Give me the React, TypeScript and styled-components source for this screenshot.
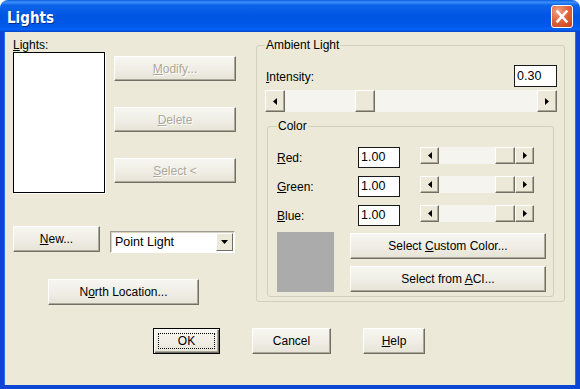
import styled, { createGlobalStyle } from "styled-components";

const GlobalStyle = createGlobalStyle`
  html, body {
    margin: 0;
    padding: 0;
    background: #ffffff;
  }
  body {
    font-family: "Liberation Sans", Arial, sans-serif;
    font-size: 12px;
    color: #000;
  }
`;

const ScrollBar = ({ value, h, aw }: { value: number; h: number; aw: number }) => {
  return (
    <Track $h={h}>
      <ArrowButton $w={aw}>
        <svg width="4" height="7" viewBox="0 0 4 7">
          <polygon points="4,0 0,3.5 4,7" fill="#000" />
        </svg>
      </ArrowButton>
      <Rail>
        <Spacer style={{ flexGrow: value }} />
        <Thumb />
        <Spacer style={{ flexGrow: 1 - value }} />
      </Rail>
      <ArrowButton $w={aw}>
        <svg width="4" height="7" viewBox="0 0 4 7">
          <polygon points="0,0 4,3.5 0,7" fill="#000" />
        </svg>
      </ArrowButton>
    </Track>
  );
};

const ColorRow = ({ label, rest }: { label: string; rest: string }) => {
  return (
    <Row>
      <RowLabel>
        <u>{label}</u>
        {rest}
      </RowLabel>
      <Edit $w={42} $h={21}>1.00</Edit>
      <ScrollSlot>
        <ScrollBar value={1} h={17} aw={19} />
      </ScrollSlot>
    </Row>
  );
};

const App = () => {
  return (
    <>
      <GlobalStyle />
      <Window>
        <TitleBar>
          <Title>Lights</Title>
          <CloseButton>
            <svg width="20" height="21" viewBox="0 0 20 21">
              <path d="M5.5 5.5 L14.5 15.5 M14.5 5.5 L5.5 15.5" stroke="#fff" strokeWidth="2.6" strokeLinecap="square" />
            </svg>
          </CloseButton>
        </TitleBar>
        <Frame>
          <Main>
            <LeftCol>
              <Label>
                <u>L</u>ights:
              </Label>
              <ListRow>
                <ListBox />
                <SideButtons>
                  <Button $w={122} $h={25} disabled>
                    <u>M</u>odify...
                  </Button>
                  <Button $w={122} $h={25} disabled>
                    <u>D</u>elete
                  </Button>
                  <Button $w={122} $h={25} disabled>
                    <u>S</u>elect &lt;
                  </Button>
                </SideButtons>
              </ListRow>
              <NewRow>
                <Button $w={87}>
                  <u>N</u>ew...
                </Button>
                <Combo>
                  <ComboText>Point Light</ComboText>
                  <ComboButton>
                    <svg width="7" height="4" viewBox="0 0 7 4">
                      <polygon points="0,0 7,0 3.5,4" fill="#000" />
                    </svg>
                  </ComboButton>
                </Combo>
              </NewRow>
              <NorthButton $w={151}>
                N<u>o</u>rth Location...
              </NorthButton>
            </LeftCol>

            <AmbientGroup>
              <Legend>Ambient Light</Legend>
              <IntensityRow>
                <IntensityLabel>
                  <u>I</u>ntensity:
                </IntensityLabel>
                <Edit $w={43} $h={22}>0.30</Edit>
              </IntensityRow>
              <IntensityScroll>
                <ScrollBar value={0.3} h={22} aw={20} />
              </IntensityScroll>

              <ColorGroup>
                <ColorLegend>Color</ColorLegend>
                <Rows>
                  <ColorRow label="R" rest="ed:" />
                  <ColorRow label="G" rest="reen:" />
                  <ColorRow label="B" rest="lue:" />
                </Rows>
                <SwatchRow>
                  <Swatch />
                  <SwatchButtons>
                    <Button $w={196}>
                      Select <u>C</u>ustom Color...
                    </Button>
                    <Button $w={196}>
                      Select from <u>A</u>CI...
                    </Button>
                  </SwatchButtons>
                </SwatchRow>
              </ColorGroup>
            </AmbientGroup>
          </Main>

          <Footer>
            <DefaultButton $w={67}>
              <FocusRing>OK</FocusRing>
            </DefaultButton>
            <Button $w={79}>Cancel</Button>
            <Button $w={62}>
              <u>H</u>elp
            </Button>
          </Footer>
        </Frame>
      </Window>
    </>
  );
};

export default App;

const Window = styled.div`
  width: 580px;
  height: 389px;
  display: flex;
  flex-direction: column;
  border-radius: 8px 8px 0 0;
  overflow: hidden;
`;

const TitleBar = styled.div`
  height: 32px;
  flex-shrink: 0;
  display: flex;
  align-items: flex-start;
  justify-content: space-between;
  padding: 0 7px;
  background: linear-gradient(
    180deg,
    #0a5fe0 0%,
    #3d8ff9 7%,
    #0c63ea 16%,
    #0056e3 50%,
    #0058ea 82%,
    #0663f4 92%,
    #0343c9 100%
  );
`;

const Title = styled.div`
  margin-top: 10px;
  font-family: "Liberation Sans Narrow", "DejaVu Sans Condensed", "Liberation Sans", sans-serif;
  font-weight: bold;
  font-size: 15px;
  line-height: 17px;
  color: #fff;
  text-shadow: 1px 1px 0 #0a2a8c;
`;

const CloseButton = styled.div`
  margin-top: 5px;
  width: 22px;
  height: 23px;
  box-sizing: border-box;
  display: flex;
  align-items: center;
  justify-content: center;
  border: 1px solid #fff;
  border-radius: 3px;
  background: radial-gradient(circle at 30% 25%, #f0a283 0%, #e2663f 45%, #c4411a 100%);
`;

const Frame = styled.div`
  flex: 1;
  display: flex;
  flex-direction: column;
  background: #ece9d8;
  border: 4px solid #0b47d4;
  border-top: 0;
  box-shadow: inset 1px 0 0 #2a6cf0, inset -1px 0 0 #2a6cf0;
`;

const Main = styled.div`
  display: grid;
  grid-template-columns: 223px 309px;
  column-gap: 20px;
  align-items: start;
  padding: 6px 0 0 9px;
`;

const LeftCol = styled.div`
  display: flex;
  flex-direction: column;
`;

const Label = styled.div`
  line-height: 14px;
`;

const ListRow = styled.div`
  display: flex;
  align-items: flex-start;
`;

const ListBox = styled.div`
  width: 92px;
  height: 141px;
  box-sizing: border-box;
  background: #fff;
  border: 1px solid #000;
  box-shadow: 1px 1px 0 #fff;
`;

const SideButtons = styled.div`
  display: flex;
  flex-direction: column;
  gap: 26px;
  margin-left: 9px;
  padding-top: 4px;
`;

const Button = styled.button<{ $w: number; $h?: number }>`
  width: ${(p) => p.$w}px;
  height: ${(p) => p.$h ?? 26}px;
  box-sizing: border-box;
  padding: 0;
  font-family: "Liberation Sans", Arial, sans-serif;
  font-size: 12px;
  color: #000;
  background: linear-gradient(180deg, #f7f6f1 0%, #eeece3 60%, #e6e3d6 100%);
  border: 1px solid;
  border-color: #ffffff #716f64 #716f64 #ffffff;
  box-shadow: inset -1px -1px 0 #aca899;
  flex-shrink: 0;

  &:disabled {
    color: #aca899;
    text-shadow: 1px 1px 0 #fff;
  }
`;

const NewRow = styled.div`
  display: flex;
  align-items: flex-start;
  gap: 10px;
  margin-top: 33px;
`;

const Combo = styled.div`
  margin-top: 5px;
  width: 125px;
  height: 22px;
  box-sizing: border-box;
  display: flex;
  background: #fff;
  border: 1px solid;
  border-color: #9d9b90 #fff #fff #9d9b90;
  box-shadow: inset 1px 1px 0 #d6d3c6;
`;

const ComboText = styled.div`
  flex: 1;
  padding-left: 4px;
  line-height: 20px;
  font-size: 12.5px;
`;

const ComboButton = styled.div`
  width: 17px;
  display: flex;
  align-items: center;
  justify-content: center;
  background: #ece9d8;
  border: 1px solid;
  border-color: #fff #716f64 #716f64 #fff;
  box-sizing: border-box;
  margin: 1px;
`;

const NorthButton = styled(Button)`
  margin: 26px 0 0 35px;
`;

const AmbientGroup = styled.fieldset`
  margin: 0;
  min-width: 0;
  padding: 0 7px 4px 8px;
  border: 1px solid #d0d0bf;
  border-radius: 3px;
  display: flex;
  flex-direction: column;
`;

const Legend = styled.legend`
  padding: 0 1px;
  line-height: 14px;
  font-size: 12px;
`;

const IntensityRow = styled.div`
  display: flex;
  align-items: center;
  justify-content: space-between;
  margin-top: 13px;
`;

const IntensityLabel = styled.div`
  margin-left: 1px;
  padding-top: 2px;
`;

const Edit = styled.div<{ $w: number; $h: number }>`
  width: ${(p) => p.$w}px;
  height: ${(p) => p.$h}px;
  box-sizing: border-box;
  padding-left: 2px;
  line-height: ${(p) => p.$h - 2}px;
  font-size: 12.5px;
  background: #fff;
  border: 1px solid #1a1a1a;
  flex-shrink: 0;
`;

const IntensityScroll = styled.div`
  margin-top: 3px;
`;

const Track = styled.div<{ $h: number }>`
  height: ${(p) => p.$h}px;
  display: flex;
`;

const ArrowButton = styled.div<{ $w: number }>`
  width: ${(p) => p.$w}px;
  flex-shrink: 0;
  box-sizing: border-box;
  display: flex;
  align-items: center;
  justify-content: center;
  background: #ece9d8;
  border: 1px solid;
  border-color: #fff #716f64 #716f64 #fff;
  box-shadow: inset -1px -1px 0 #aca899;
`;

const Rail = styled.div`
  flex: 1;
  display: flex;
  background: #f5f4ee;
`;

const Spacer = styled.div`
  flex-basis: 0;
`;

const Thumb = styled.div`
  width: 20px;
  flex-shrink: 0;
  box-sizing: border-box;
  background: #ece9d8;
  border: 1px solid;
  border-color: #fff #716f64 #716f64 #fff;
  box-shadow: inset -1px -1px 0 #aca899;
`;

const ColorGroup = styled.fieldset`
  margin: 7px 3px 0 2px;
  min-width: 0;
  padding: 0 7px 4px 9px;
  border: 1px solid #d0d0bf;
  border-radius: 3px;
`;

const ColorLegend = styled(Legend)``;

const Rows = styled.div`
  display: flex;
  flex-direction: column;
  gap: 8px;
  margin-top: 14px;
`;

const Row = styled.div`
  display: flex;
  align-items: flex-start;
  height: 21px;
`;

const RowLabel = styled.div`
  width: 81px;
  line-height: 22px;
  height: 21px;
`;

const ScrollSlot = styled.div`
  width: 114px;
  margin-left: 20px;
`;

const SwatchRow = styled.div`
  display: flex;
  align-items: flex-start;
  margin-top: 6px;
`;

const Swatch = styled.div`
  width: 57px;
  height: 60px;
  background: #ababab;
`;

const SwatchButtons = styled.div`
  display: flex;
  flex-direction: column;
  gap: 7px;
  margin-left: 16px;
  padding-top: 1px;
`;

const Footer = styled.div`
  display: flex;
  justify-content: center;
  gap: 32px;
  margin-top: 23px;
  padding-right: 2px;
`;

const DefaultButton = styled(Button)`
  border: 1px solid #000;
  box-shadow: inset 1px 1px 0 #fff, inset -1px -1px 0 #716f64, inset -2px -2px 0 #aca899;
  padding: 4px;
`;

const FocusRing = styled.span`
  display: flex;
  align-items: center;
  justify-content: center;
  height: 100%;
  box-sizing: border-box;
  border: 1px dotted #000;
`;
